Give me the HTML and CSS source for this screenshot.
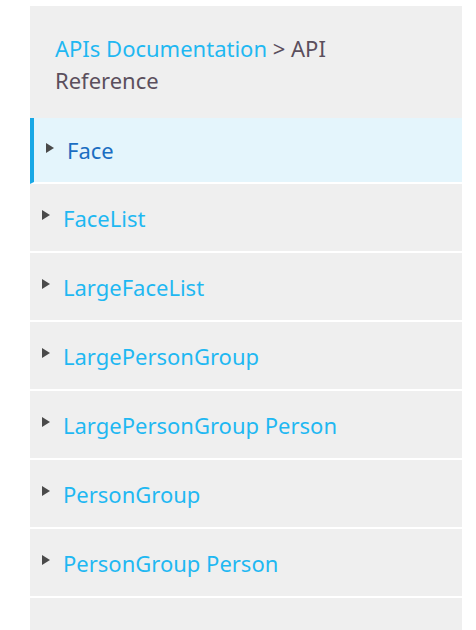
FILE: index.html
```html
<!DOCTYPE html>
<html>
<head>
<meta charset="utf-8">
<link rel="stylesheet" href="styles.css">
</head>
<body>
<nav class="panel">
  <div class="crumbs"><a class="crumb-link">APIs Documentation</a> &gt; API Reference</div>
  <ul class="list">
    <li class="item active"><span class="tri"></span><span class="label">Face</span></li>
    <li class="item"><span class="tri"></span><span class="label">FaceList</span></li>
    <li class="item"><span class="tri"></span><span class="label">LargeFaceList</span></li>
    <li class="item"><span class="tri"></span><span class="label">LargePersonGroup</span></li>
    <li class="item"><span class="tri"></span><span class="label">LargePersonGroup Person</span></li>
    <li class="item"><span class="tri"></span><span class="label">PersonGroup</span></li>
    <li class="item"><span class="tri"></span><span class="label">PersonGroup Person</span></li>
  </ul>
  <div class="rest"></div>
</nav>
</body>
</html>
```

FILE: styles.css
```css
html, body {
  margin: 0;
  padding: 0;
  background: #ffffff;
  height: 100%;
  overflow: hidden;
}
body {
  font-family: "Noto Sans", "Open Sans", sans-serif;
}
.panel {
  margin: 6px 0 0 30px;
  width: 432px;
  min-height: 624px;
  background: #efefef;
  display: flex;
  flex-direction: column;
}
.crumbs {
  padding: 26px 110px 22px 25px;
  font-size: 22px;
  line-height: 32px;
  color: #5b4f5d;
}
.crumb-link {
  color: #1fb8f2;
}
.list {
  list-style: none;
  margin: 0;
  padding: 0;
}
.item {
  height: 67px;
  border-bottom: 2px solid #ffffff;
  display: flex;
  align-items: center;
  padding-left: 12px;
  font-size: 22px;
  color: #1fb8f2;
}
.item.active {
  height: 64px;
  background: #e4f5fc;
  border-left: 4px solid #18a8e6;
  color: #1b6ec2;
}
.tri {
  width: 0;
  height: 0;
  border-left: 8px solid #4a4a4a;
  border-top: 5px solid transparent;
  border-bottom: 5px solid transparent;
  margin-right: 13px;
  margin-top: -5px;
}
.label {
  display: block;
}
.rest {
  flex: 1;
}
```
